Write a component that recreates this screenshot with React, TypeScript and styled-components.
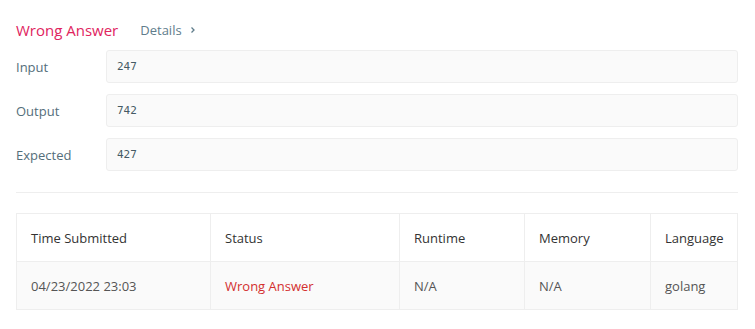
import React from "react";
import styled, { createGlobalStyle } from "styled-components";

const GlobalStyle = createGlobalStyle`
    html, body {
        margin: 0;
        padding: 0;
        background: #fff;
        font-family: "Open Sans", "Noto Sans", sans-serif;
    }
`;

interface Case {
    label: string;
    value: string;
}

const cases: Case[] = [
    { label: "Input", value: "247" },
    { label: "Output", value: "742" },
    { label: "Expected", value: "427" },
];

const columns = ["Time Submitted", "Status", "Runtime", "Memory", "Language"];
const widths = [194, 189, 125, 126, 87];

const submission = {
    time: "04/23/2022 23:03",
    status: "Wrong Answer",
    runtime: "N/A",
    memory: "N/A",
    language: "golang",
};

const App: React.FC = () => {
    return (
        <Page>
            <GlobalStyle />
            <Header>
                <Verdict>Wrong Answer</Verdict>
                <DetailsLink>
                    Details
                    <Chevron viewBox="0 0 8 8">
                        <path d="M2.5 1.5 L5 4 L2.5 6.5" />
                    </Chevron>
                </DetailsLink>
            </Header>

            <Cases>
                {cases.map(c => (
                    <CaseRow key={c.label}>
                        <CaseLabel>{c.label}</CaseLabel>
                        <CaseValue>{c.value}</CaseValue>
                    </CaseRow>
                ))}
            </Cases>

            <Divider />

            <Table>
                <colgroup>
                    {widths.map((w, i) => (
                        <col key={i} style={{ width: w }} />
                    ))}
                </colgroup>
                <thead>
                    <tr>
                        {columns.map(c => (
                            <Th key={c}>{c}</Th>
                        ))}
                    </tr>
                </thead>
                <tbody>
                    <BodyRow>
                        <Td>{submission.time}</Td>
                        <Td $status>{submission.status}</Td>
                        <Td>{submission.runtime}</Td>
                        <Td>{submission.memory}</Td>
                        <Td>{submission.language}</Td>
                    </BodyRow>
                </tbody>
            </Table>
        </Page>
    );
};

export default App;

const Page = styled.div`
    width: 722px;
    padding: 18px 17px 20px 16px;
`;

const Header = styled.div`
    display: flex;
    align-items: center;
    height: 24px;
    margin-bottom: 8px;
`;

const Verdict = styled.div`
    font-size: 15px;
    color: #e0245e;
    margin-right: 22px;
`;

const DetailsLink = styled.div`
    display: flex;
    align-items: center;
    font-size: 13px;
    color: #607d8b;
`;

const Chevron = styled.svg`
    width: 8px;
    height: 8px;
    margin-left: 7px;
    fill: none;
    stroke: #607d8b;
    stroke-width: 1.3;
`;

const Cases = styled.div`
    display: flex;
    flex-direction: column;
    gap: 11px;
`;

const CaseRow = styled.div`
    display: flex;
    align-items: center;
`;

const CaseLabel = styled.div`
    width: 90px;
    font-size: 13px;
    color: #546e7a;
`;

const CaseValue = styled.div`
    flex: 1;
    box-sizing: border-box;
    height: 33px;
    display: flex;
    align-items: center;
    padding: 0 10px;
    background: #fafafa;
    border: 1px solid #eeeeee;
    border-radius: 3px;
    font-family: "DejaVu Sans Mono", monospace;
    font-size: 11px;
    color: #455a64;
`;

const Divider = styled.div`
    height: 1px;
    background: #eeeeee;
    margin: 21px 0 20px;
`;

const Table = styled.table`
    width: 722px;
    border-collapse: collapse;
    table-layout: fixed;
`;

const Th = styled.th`
    height: 47px;
    padding: 0 14px;
    text-align: left;
    font-weight: normal;
    font-size: 13px;
    color: #333;
    border: 1px solid #eeeeee;
`;

const BodyRow = styled.tr`
    background: #fafafa;
`;

const Td = styled.td<{ $status?: boolean }>`
    height: 47px;
    padding: 0 14px;
    font-size: 13px;
    color: ${p => (p.$status ? "#d32f2f" : "#555")};
    border: 1px solid #eeeeee;
`;
